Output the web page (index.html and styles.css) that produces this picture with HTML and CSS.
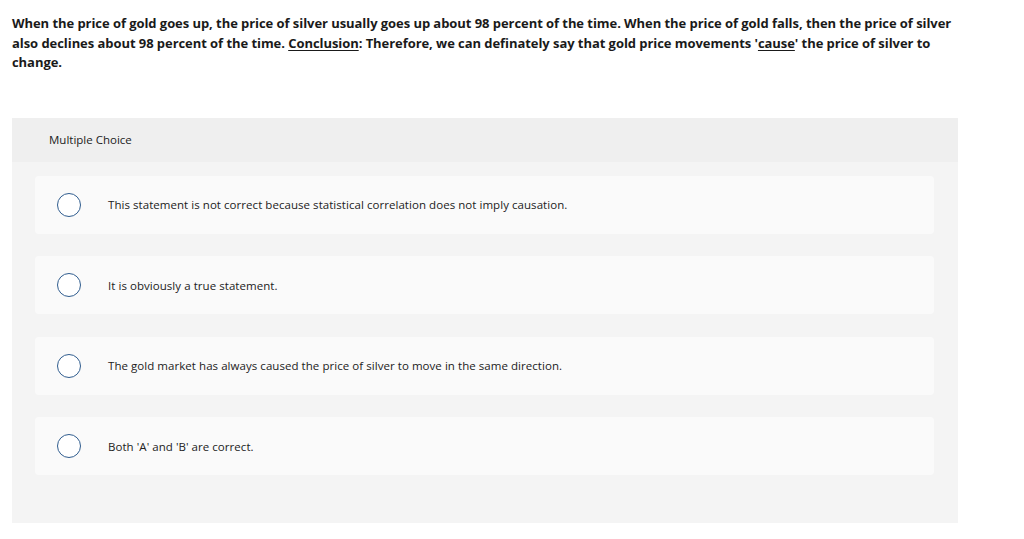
FILE: index.html
```html
<!DOCTYPE html>
<html>
<head>
<meta charset="utf-8">
<link rel="stylesheet" href="styles.css">
</head>
<body>
<p class="question">When the price of gold goes up, the price of silver usually goes up about 98 percent of the time. When the price of gold falls, then the price of silver also declines about 98 percent of the time. <u>Conclusion</u>: Therefore, we can definately say that gold price movements '<u>cause</u>' the price of silver to change.</p>
<div class="panel">
  <div class="panel-head">Multiple Choice</div>
  <div class="panel-body">
    <div class="choice"><span class="radio"></span><span class="label">This statement is not correct because statistical correlation does not imply causation.</span></div>
    <div class="choice"><span class="radio"></span><span class="label">It is obviously a true statement.</span></div>
    <div class="choice"><span class="radio"></span><span class="label">The gold market has always caused the price of silver to move in the same direction.</span></div>
    <div class="choice"><span class="radio"></span><span class="label">Both 'A' and 'B' are correct.</span></div>
  </div>
</div>
</body>
</html>
```
FILE: styles.css
```css
html, body { margin: 0; padding: 0; background: #fff; }
body {
  font-family: "Open Sans", "Liberation Sans", sans-serif;
  color: #1a1a1a;
  padding: 14px 12px 0 12px;
}
.question {
  margin: 0;
  font-weight: 700;
  font-size: 13px;
  line-height: 19.5px;
  width: 950px;
  letter-spacing: -0.06px;
}
.question u { text-underline-offset: 2px; }
.panel {
  margin-top: 45px;
  width: 946px;
  background: #f4f4f4;
}
.panel-head {
  background: #efefef;
  height: 44px;
  display: flex;
  align-items: center;
  padding-left: 37px;
  font-size: 11.5px;
  color: #222;
}
.panel-body {
  padding: 14px 24px 48px 23px;
  display: flex;
  flex-direction: column;
  gap: 22.5px;
}
.choice {
  background: #fafafa;
  height: 58px;
  border-radius: 4px;
  display: flex;
  align-items: center;
  padding-left: 22px;
}
.radio {
  width: 24px;
  height: 24px;
  border: 1.3px solid #2f5c8e;
  border-radius: 50%;
  background: #fff;
  box-sizing: border-box;
  flex: none;
}
.label {
  margin-left: 27px;
  font-size: 11.5px;
  letter-spacing: 0.05px;
  color: #222;
}
```
